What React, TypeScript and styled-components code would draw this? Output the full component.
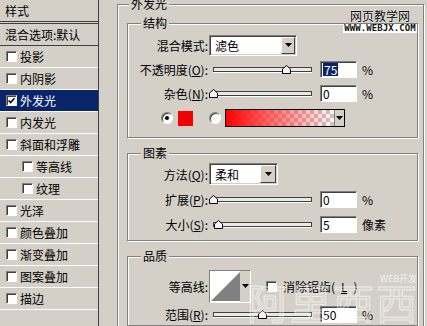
import React from 'react';
import styled, { createGlobalStyle } from 'styled-components';

const FACE = '#d4d0c8';
const SHADOW = '#808080';
const DARK = '#404040';
const NAVY = '#0a246a';

const GlobalStyle = createGlobalStyle`
  html, body {
    margin: 0;
    padding: 0;
    background: ${FACE};
  }
  body {
    font-family: "Noto Sans CJK SC", "Liberation Sans", sans-serif;
    font-size: 12px;
    color: #000;
  }
`;

const Window = styled.div`
  position: relative;
  display: flex;
  width: 427px;
  height: 326px;
  overflow: hidden;
  background: ${FACE};
`;

/* ---------- style list on the left ---------- */

const StyleList = styled.ul`
  flex: none;
  width: 98px;
  margin: 0;
  padding: 0;
  list-style: none;
  border-right: 1px solid ${DARK};
`;

const ListHeader = styled.li`
  display: flex;
  align-items: center;
  height: 21px;
  padding-left: 5px;
  border-bottom: 1px solid ${DARK};
`;

const HeaderRule = styled.li`
  height: 1px;
  background: ${FACE};
  border-bottom: 1px solid ${DARK};
`;

const BlendRow = styled.li`
  display: flex;
  align-items: center;
  height: 21px;
  padding-left: 5px;
  border-bottom: 1px solid ${DARK};
  white-space: nowrap;
`;

const StyleItem = styled.li<{ $selected?: boolean; $indent?: boolean }>`
  display: flex;
  align-items: center;
  gap: 3px;
  height: 21px;
  padding-left: ${({ $indent }) => ($indent ? 22 : 6)}px;
  border-bottom: 1px solid #fff;
  background: ${({ $selected }) => ($selected ? NAVY : 'transparent')};
  color: ${({ $selected }) => ($selected ? '#fff' : '#000')};
  white-space: nowrap;
`;

const CheckBox = styled.span`
  flex: none;
  display: inline-flex;
  align-items: center;
  justify-content: center;
  box-sizing: border-box;
  width: 11px;
  height: 11px;
  background: #fff;
  border-top: 1px solid ${SHADOW};
  border-left: 1px solid ${SHADOW};
  border-right: 1px solid #fff;
  border-bottom: 1px solid #fff;
  box-shadow: inset 1px 1px 0 ${DARK};
`;

/* ---------- right side ---------- */

const Main = styled.div`
  flex: 1;
  padding: 4px 3px 0 18px;
`;

const Group = styled.div`
  position: relative;
  border: 1px solid ${SHADOW};
  box-shadow: inset 1px 1px 0 #fff, 1px 1px 0 #fff;
`;

const OuterGroup = styled(Group)`
  height: 340px;
  padding: 18px 5px 0 9px;
`;

const Stack = styled.div`
  display: flex;
  flex-direction: column;
  gap: 15px;
`;

const InnerGroup = styled(Group)<{ $pt: number; $pb: number }>`
  padding: ${({ $pt }) => $pt}px 0 ${({ $pb }) => $pb}px 0;
`;

const GroupTitle = styled.span<{ $left: number }>`
  position: absolute;
  top: -7px;
  left: ${({ $left }) => $left}px;
  padding: 0 2px;
  line-height: 12px;
  background: ${FACE};
  white-space: nowrap;
`;

const Row = styled.div<{ $h: number }>`
  display: flex;
  align-items: center;
  height: ${({ $h }) => $h}px;
`;

const Label = styled.span`
  flex: none;
  width: 80px;
  text-align: right;
  white-space: nowrap;
`;

const Select = styled.div<{ $w: number; $h: number }>`
  display: flex;
  box-sizing: border-box;
  width: ${({ $w }) => $w}px;
  height: ${({ $h }) => $h}px;
  margin-left: 1px;
  background: #fff;
  border-top: 1px solid ${SHADOW};
  border-left: 1px solid ${SHADOW};
  border-right: 1px solid #fff;
  border-bottom: 1px solid #fff;
  box-shadow: inset 1px 1px 0 ${DARK}, inset -1px -1px 0 ${FACE};
`;

const SelectText = styled.span`
  flex: 1;
  display: flex;
  align-items: center;
  padding-left: 5px;
`;

const SelectButton = styled.span<{ $w: number }>`
  display: flex;
  align-items: center;
  justify-content: center;
  box-sizing: border-box;
  width: ${({ $w }) => $w}px;
  margin: 1px 1px 1px 0;
  background: ${FACE};
  border-top: 1px solid #fff;
  border-left: 1px solid #fff;
  border-right: 1px solid ${DARK};
  border-bottom: 1px solid ${DARK};
`;

const Track = styled.div`
  position: relative;
  flex: none;
  box-sizing: border-box;
  width: 99px;
  height: 5px;
  margin-left: 5px;
  background: #ebe9e5;
  border: 1px solid ${DARK};
  box-shadow: 0 1px 0 #fff;
`;

const Thumb = styled.svg`
  position: absolute;
  top: -3px;
  width: 9px;
  height: 9px;
  margin-left: -5px;
`;

const Field = styled.div`
  display: flex;
  align-items: center;
  box-sizing: border-box;
  width: 37px;
  height: 17px;
  margin-left: 8px;
  padding-left: 2px;
  background: #fff;
  border-top: 1px solid ${SHADOW};
  border-left: 1px solid ${SHADOW};
  border-right: 1px solid #fff;
  border-bottom: 1px solid #fff;
  box-shadow: inset 1px 1px 0 ${DARK};
  line-height: 13px;
`;

const Selected = styled.span`
  background: ${NAVY};
  color: #fff;
  padding: 0 1px;
`;

const Unit = styled.span`
  margin-left: 5px;
  white-space: nowrap;
`;

const Radio = styled.span<{ $gap: number }>`
  flex: none;
  display: flex;
  align-items: center;
  justify-content: center;
  box-sizing: border-box;
  width: 12px;
  height: 12px;
  margin-left: ${({ $gap }) => $gap}px;
  border-radius: 50%;
  background: #fff;
  border-top: 1px solid ${SHADOW};
  border-left: 1px solid ${SHADOW};
  border-right: 1px solid #fff;
  border-bottom: 1px solid #fff;
  box-shadow: inset 1px 1px 0 ${DARK};
`;

const RadioDot = styled.span`
  width: 4px;
  height: 4px;
  border-radius: 50%;
  background: #000;
`;

const Swatch = styled.span`
  flex: none;
  width: 15px;
  height: 15px;
  margin-left: 5px;
  background: #f20000;
`;

const GradientPicker = styled.div`
  display: flex;
  box-sizing: border-box;
  width: 120px;
  height: 18px;
  margin-left: 4px;
  border: 1px solid #000;
`;

const GradientFill = styled.span`
  flex: 1;
  background:
    linear-gradient(90deg, #ff0000 0%, rgba(255, 50, 50, 0.8) 35%, rgba(255, 120, 120, 0.05) 100%),
    repeating-conic-gradient(#c8c8c8 0% 25%, #fff 0% 50%) 0 0 / 8px 8px;
`;

const GradientArrow = styled.span`
  display: flex;
  align-items: center;
  justify-content: center;
  width: 9px;
  background: ${FACE};
  border-left: 1px solid ${SHADOW};
`;

const Contour = styled.div`
  display: flex;
  box-sizing: border-box;
  width: 42px;
  height: 33px;
  margin-left: 1px;
  border-top: 1px solid ${SHADOW};
  border-left: 1px solid ${SHADOW};
  border-right: 1px solid #fff;
  border-bottom: 1px solid #fff;
  box-shadow: inset 1px 1px 0 ${DARK};
`;

const ContourPreview = styled.span`
  display: flex;
  flex: 1;
  padding: 1px 0 0 1px;
  background: #fff;
`;

const ContourArrow = styled.span`
  display: flex;
  align-items: center;
  justify-content: center;
  width: 10px;
  background: ${FACE};
`;

const AntiAlias = styled.label`
  display: flex;
  align-items: center;
  gap: 6px;
  margin-left: 15px;
  white-space: nowrap;
`;

/* ---------- watermarks laid over the dialog ---------- */

const SiteName = styled.span`
  position: absolute;
  top: 9px;
  left: 350px;
  font-size: 12px;
  line-height: 13px;
  color: #000;
  text-shadow: 0 0 1px #fff, 0 0 1px #fff;
  white-space: nowrap;
`;

const SiteUrl = styled.span`
  position: absolute;
  top: 24px;
  left: 343px;
  width: 74px;
  height: 9px;
  background: #fff;
  font-family: "DejaVu Sans Mono", monospace;
  font-size: 9px;
  font-weight: bold;
  line-height: 9px;
  letter-spacing: 0.1px;
  text-align: center;
  color: #111;
  white-space: nowrap;
`;

const WebMark = styled.span`
  position: absolute;
  top: 272px;
  left: 380px;
  font-size: 9px;
  color: rgba(255, 255, 255, 0.7);
  white-space: nowrap;
`;

const BigMark = styled.span`
  position: absolute;
  top: 279px;
  left: 247px;
  font-size: 41px;
  line-height: 44px;
  letter-spacing: 2px;
  color: rgba(255, 255, 255, 0.1);
  -webkit-text-stroke: 1px rgba(255, 255, 255, 0.6);
  white-space: nowrap;
  pointer-events: none;
`;

/* ---------- small drawings ---------- */

const DownArrow = () => (
  <svg width="7" height="4" viewBox="0 0 7 4">
    <polygon points="0,0 7,0 3.5,4" fill="#000" />
  </svg>
);

const CheckMark = () => (
  <svg width="7" height="7" viewBox="0 0 7 7">
    <path d="M0.6 3.4 L2.6 5.6 L6.5 1.2" fill="none" stroke="#000" strokeWidth="1.5" />
  </svg>
);

const Slider = ({ value }: { value: number }) => (
  <Track>
    <Thumb viewBox="0 0 9 9" style={{ left: `${value}%` }}>
      <polygon points="4.5,0.5 8.5,4 8.5,8.5 0.5,8.5 0.5,4" fill="#f4f4f4" stroke="#000" />
    </Thumb>
  </Track>
);

interface StyleEntry {
  label: string;
  checked?: boolean;
  selected?: boolean;
  indent?: boolean;
}

const styleEntries: StyleEntry[] = [
  { label: '投影' },
  { label: '内阴影' },
  { label: '外发光', checked: true, selected: true },
  { label: '内发光' },
  { label: '斜面和浮雕' },
  { label: '等高线', indent: true },
  { label: '纹理', indent: true },
  { label: '光泽' },
  { label: '颜色叠加' },
  { label: '渐变叠加' },
  { label: '图案叠加' },
  { label: '描边' },
];

const App: React.FC = () => (
  <>
    <GlobalStyle />
    <Window>
      <StyleList>
        <ListHeader>样式</ListHeader>
        <HeaderRule />
        <BlendRow>混合选项:默认</BlendRow>
        {styleEntries.map((item) => (
          <StyleItem key={item.label} $selected={item.selected} $indent={item.indent}>
            <CheckBox>{item.checked ? <CheckMark /> : null}</CheckBox>
            {item.label}
          </StyleItem>
        ))}
      </StyleList>

      <Main>
        <OuterGroup>
          <GroupTitle $left={11}>外发光</GroupTitle>
          <Stack>
            <InnerGroup $pt={10} $pb={5}>
              <GroupTitle $left={13}>结构</GroupTitle>
              <Row $h={22}>
                <Label>混合模式:</Label>
                <Select $w={88} $h={21}>
                  <SelectText>滤色</SelectText>
                  <SelectButton $w={14}>
                    <DownArrow />
                  </SelectButton>
                </Select>
              </Row>
              <Row $h={26}>
                <Label>
                  不透明度(<u>O</u>):
                </Label>
                <Slider value={75} />
                <Field>
                  <Selected>75</Selected>
                </Field>
                <Unit>%</Unit>
              </Row>
              <Row $h={22}>
                <Label>
                  杂色(<u>N</u>):
                </Label>
                <Slider value={0} />
                <Field>0</Field>
                <Unit>%</Unit>
              </Row>
              <Row $h={28}>
                <Radio $gap={33}>
                  <RadioDot />
                </Radio>
                <Swatch />
                <Radio $gap={16} />
                <GradientPicker>
                  <GradientFill />
                  <GradientArrow>
                    <DownArrow />
                  </GradientArrow>
                </GradientPicker>
              </Row>
            </InnerGroup>

            <InnerGroup $pt={9} $pb={5}>
              <GroupTitle $left={13}>图素</GroupTitle>
              <Row $h={22}>
                <Label>
                  方法(<u>Q</u>):
                </Label>
                <Select $w={69} $h={22}>
                  <SelectText>柔和</SelectText>
                  <SelectButton $w={16}>
                    <DownArrow />
                  </SelectButton>
                </Select>
              </Row>
              <Row $h={28}>
                <Label>
                  扩展(<u>P</u>):
                </Label>
                <Slider value={0} />
                <Field>0</Field>
                <Unit>%</Unit>
              </Row>
              <Row $h={22}>
                <Label>
                  大小(<u>S</u>):
                </Label>
                <Slider value={5} />
                <Field>5</Field>
                <Unit>像素</Unit>
              </Row>
            </InnerGroup>

            <InnerGroup $pt={12} $pb={0}>
              <GroupTitle $left={13}>品质</GroupTitle>
              <Row $h={34}>
                <Label>等高线:</Label>
                <Contour>
                  <ContourPreview>
                    <svg width="29" height="29" viewBox="0 0 29 29">
                      <polygon points="0,29 29,0 29,29" fill="#808080" />
                    </svg>
                  </ContourPreview>
                  <ContourArrow>
                    <DownArrow />
                  </ContourArrow>
                </Contour>
                <AntiAlias>
                  <CheckBox />
                  消除锯齿(<u>L</u>)
                </AntiAlias>
              </Row>
              <Row $h={22}>
                <Label>
                  范围(<u>R</u>):
                </Label>
                <Slider value={50} />
                <Field>50</Field>
                <Unit>%</Unit>
              </Row>
            </InnerGroup>
          </Stack>
        </OuterGroup>
      </Main>

      <SiteName>网页教学网</SiteName>
      <SiteUrl>WWW.WEBJX.COM</SiteUrl>
      <WebMark>WEB开发</WebMark>
      <BigMark>阿里西西</BigMark>
    </Window>
  </>
);

export default App;
